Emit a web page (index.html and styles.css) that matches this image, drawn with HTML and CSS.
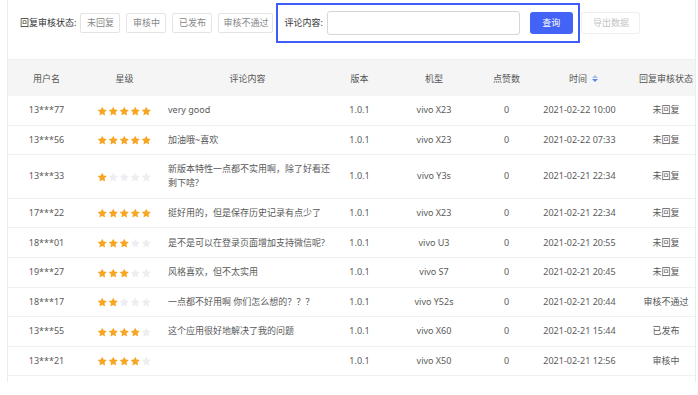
FILE: index.html
```html
<!DOCTYPE html>
<html lang="zh">
<head>
<meta charset="utf-8">
<link rel="stylesheet" href="styles.css">
<title>评论管理</title>
</head>
<body>
<svg width="0" height="0" class="defs">
  <defs>
    <symbol id="star" viewBox="0 0 24 24"><path d="M12 1.5l3.2 6.6 7.3 1.05-5.3 5.15 1.25 7.25L12 18.1l-6.45 3.45 1.25-7.25-5.3-5.15 7.3-1.05z"/></symbol>
  </defs>
</svg>
<div class="page">
  <div class="filter">
    <span class="flabel">回复审核状态:</span>
    <button class="tag">未回复</button>
    <button class="tag">审核中</button>
    <button class="tag">已发布</button>
    <button class="tag tag-wide">审核不通过</button>
    <div class="search">
      <span class="slabel">评论内容:</span>
      <input class="sinput" type="text">
      <button class="btn-primary">查询</button>
    </div>
    <button class="btn-export">导出数据</button>
  </div>
  <div class="tablewrap">
    <table class="grid">
      <colgroup>
        <col class="c1"><col class="c2"><col class="c3"><col class="c4"><col class="c5"><col class="c6"><col class="c7"><col class="c8">
      </colgroup>
      <thead>
        <tr>
          <th>用户名</th><th>星级</th><th>评论内容</th><th>版本</th><th>机型</th><th>点赞数</th>
          <th><span class="sorth">时间<span class="sort"><i class="up"></i><i class="down"></i></span></span></th>
          <th>回复审核状态</th>
        </tr>
      </thead>
      <tbody id="rows"></tbody>
    </table>
  </div>
</div>
<script>
var data = [
  ["13***77",5,"very good","vivo X23","2021-02-22 10:00","未回复"],
  ["13***56",5,"加油哦~喜欢","vivo X23","2021-02-22 07:33","未回复"],
  ["13***33",1,"新版本特性一点都不实用啊，除了好看还剩下啥?","vivo Y3s","2021-02-21 22:34","未回复"],
  ["17***22",5,"挺好用的，但是保存历史记录有点少了","vivo X23","2021-02-21 22:34","未回复"],
  ["18***01",3,"是不是可以在登录页面增加支持微信呢?","vivo U3","2021-02-21 20:55","未回复"],
  ["19***27",3,"风格喜欢，但不太实用","vivo S7","2021-02-21 20:45","未回复"],
  ["18***17",2,"一点都不好用啊 你们怎么想的？？？","vivo Y52s","2021-02-21 20:44","审核不通过"],
  ["13***55",4,"这个应用很好地解决了我的问题","vivo X60","2021-02-21 15:44","已发布"],
  ["13***21",4,"","vivo X50","2021-02-21 12:56","审核中"]
];
var html = "";
data.forEach(function (r) {
  var stars = "";
  for (var i = 0; i < 5; i++) {
    stars += '<svg class="star ' + (i < r[1] ? "on" : "off") + '"><use href="#star"/></svg>';
  }
  html += "<tr><td>" + r[0] + '</td><td><span class="stars">' + stars + '</span></td><td class="txt">' + r[2] +
    "</td><td>1.0.1</td><td>" + r[3] + "</td><td>0</td><td>" + r[4] + "</td><td>" + r[5] + "</td></tr>";
});
document.getElementById("rows").innerHTML = html;
</script>
</body>
</html>
```

FILE: styles.css
```css
* { box-sizing: border-box; }
html, body { margin: 0; padding: 0; background: #fff; }
body {
  font-family: "Noto Sans", "Noto Sans CJK SC", sans-serif;
  font-size: 9px;
  color: #5a5a5a;
}
.defs { position: absolute; width: 0; height: 0; }
.page {
  margin-left: 7px;
  width: 689px;
  border-left: 1px solid #ececec;
  border-right: 1px solid #ececec;
  padding-bottom: 6px;
  overflow: hidden;
}
.filter {
  display: flex;
  align-items: center;
  height: 60px;
  padding: 3px 0 17px 12px;
  border-bottom: 1px solid #efefef;
}
.filter > * { flex-shrink: 0; white-space: nowrap; }
.flabel { color: #333; margin-right: 4px; }
.tag {
  font: inherit;
  height: 20px;
  min-width: 40px;
  padding: 0 5px;
  margin-right: 6px;
  background: #fff;
  border: 1px solid #e4e4e4;
  border-radius: 2px;
  color: #888;
}
.tag-wide { padding: 0 4px; margin-right: 3px; }
.search {
  display: flex;
  align-items: center;
  height: 40px;
  width: 304px;
  padding: 0 5px 0 6px;
  border: 2px solid #3d5cf8;
}
.search > * { flex-shrink: 0; white-space: nowrap; }
.slabel { color: #333; margin-right: 4px; }
.sinput {
  width: 193px;
  height: 24px;
  border: 1px solid #d6d6d6;
  border-radius: 3px;
  margin-right: 10px;
  outline: none;
}
.btn-primary {
  font: inherit;
  width: 43px;
  height: 22px;
  border: none;
  border-radius: 3px;
  background: #4263f5;
  color: #fff;
}
.btn-export {
  font: inherit;
  margin-left: 1px;
  width: 59px;
  height: 22px;
  background: #fff;
  border: 1px solid #efefef;
  border-radius: 2px;
  color: #c4c4c4;
}
.tablewrap { width: 687px; overflow: hidden; }
.grid {
  width: 698px;
  table-layout: fixed;
  border-collapse: collapse;
}
.c1 { width: 77px; } .c2 { width: 79px; } .c3 { width: 167px; } .c4 { width: 57px; }
.c5 { width: 92px; } .c6 { width: 53px; } .c7 { width: 93px; } .c8 { width: 80px; }
th {
  height: 36px;
  background: #f5f5f5;
  font-weight: normal;
  color: #555;
  text-align: center;
  padding: 0;
}
td {
  text-align: center;
  line-height: 14px;
  padding: 7.3px 4px;
  border-bottom: 1px solid #f0f0f0;
  vertical-align: middle;
  white-space: nowrap;
}
td.txt { text-align: left; white-space: normal; padding-right: 0; }
.stars { display: inline-flex; gap: 0.5px; vertical-align: middle; }
.star { width: 10.5px; height: 10.5px; }
.star.on { fill: #f6a623; }
.star.off { fill: #eceef2; }
.sorth { display: inline-flex; align-items: center; padding-left: 8px; }
.sort { display: inline-flex; flex-direction: column; gap: 1px; margin-left: 5px; }
.sort i { width: 0; height: 0; border-left: 3px solid transparent; border-right: 3px solid transparent; }
.sort .up { border-bottom: 3px solid #a9bdf2; }
.sort .down { border-top: 3px solid #5b86ef; }
```
